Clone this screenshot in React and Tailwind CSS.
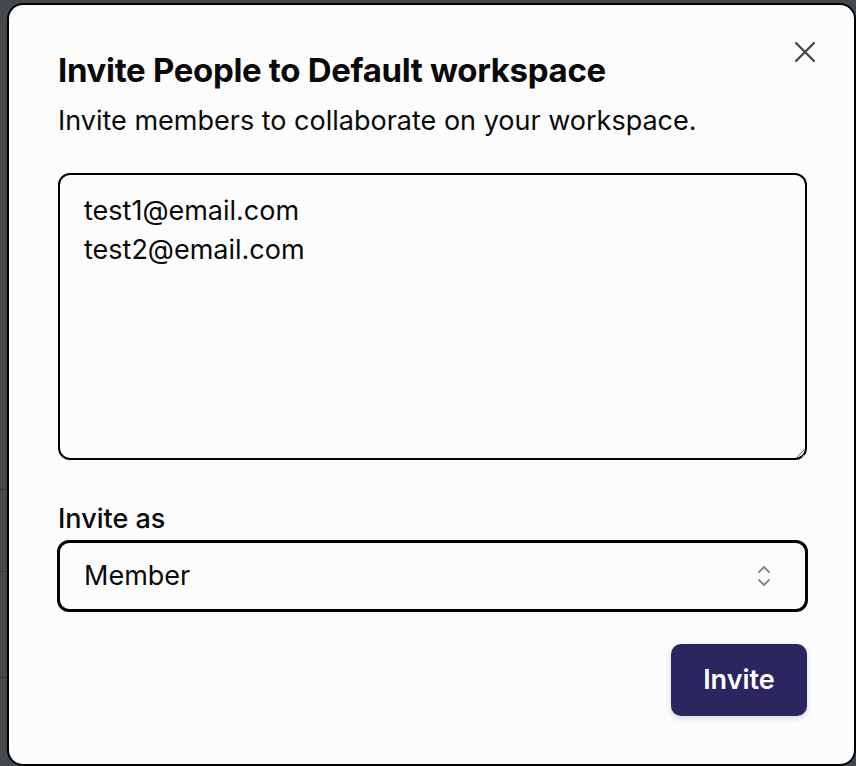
import { useState } from 'react'

function CloseIcon() {
  return (
    <svg width="22" height="22" viewBox="0 0 22 22" fill="none" stroke="#474747" strokeWidth="2.3" strokeLinecap="round">
      <path d="M2 2L20 20" />
      <path d="M20 2L2 20" />
    </svg>
  )
}

function ChevronsIcon() {
  return (
    <svg width="14" height="22" viewBox="0 0 14 22" fill="none" stroke="#8a8a8a" strokeWidth="2" strokeLinecap="round" strokeLinejoin="round">
      <path d="M2 7L7 2L12 7" />
      <path d="M2 15L7 20L12 15" />
    </svg>
  )
}

export default function App() {
  const [emails, setEmails] = useState('test1@email.com\ntest2@email.com')
  const [role] = useState('Member')

  return (
    <div className="relative h-[766px] w-[856px] overflow-hidden bg-[#45494c] font-['Inter','Noto_Sans',sans-serif]">
      {/* page behind the overlay */}
      <div className="flex h-full w-[8px] flex-col">
        <div className="h-[490px] border-b border-[#303336]" />
        <div className="h-[82px] border-b border-[#303336]" />
        <div className="h-[106px] border-b border-[#303336]" />
      </div>

      <div className="absolute left-[7px] top-[3px] flex h-[763px] w-[849px] flex-col rounded-[16px] border-2 border-black bg-[#fcfcfc] pl-[49px] pr-[47px] pt-[43px] text-[#0a0a0a]">
        <button type="button" className="absolute right-[36px] top-[34px] p-[2px]">
          <CloseIcon />
        </button>

        <h1 className="text-[33px] font-bold leading-[44px] tracking-[-0.01em]">
          Invite People to Default workspace
        </h1>
        <p className="mt-[11px] text-[27px] leading-[36px]">
          Invite members to collaborate on your workspace.
        </p>

        <textarea
          value={emails}
          onChange={(e) => setEmails(e.target.value)}
          className="mt-[34px] h-[287px] w-full resize-y rounded-[12px] border-2 border-black bg-[#fcfcfc] px-[24px] pt-[16px] text-[27px] leading-[39px] text-[#0a0a0a] outline-none"
        />

        <label className="mt-[42px] text-[27px] font-medium leading-[34px]">Invite as</label>
        <div className="-mx-[1px] mt-[4px] flex h-[72px] items-center justify-between rounded-[12px] border-[3px] border-black pl-[24px] pr-[34px]">
          <span className="text-[27px] leading-[34px]">{role}</span>
          <ChevronsIcon />
        </div>

        <div className="mt-[32px] flex justify-end">
          <button
            type="button"
            className="h-[72px] w-[136px] rounded-[10px] bg-[#2a2660] text-[27px] font-semibold text-white shadow-[0_2px_6px_rgba(0,0,0,0.15)]"
          >
            Invite
          </button>
        </div>
      </div>
    </div>
  )
}
